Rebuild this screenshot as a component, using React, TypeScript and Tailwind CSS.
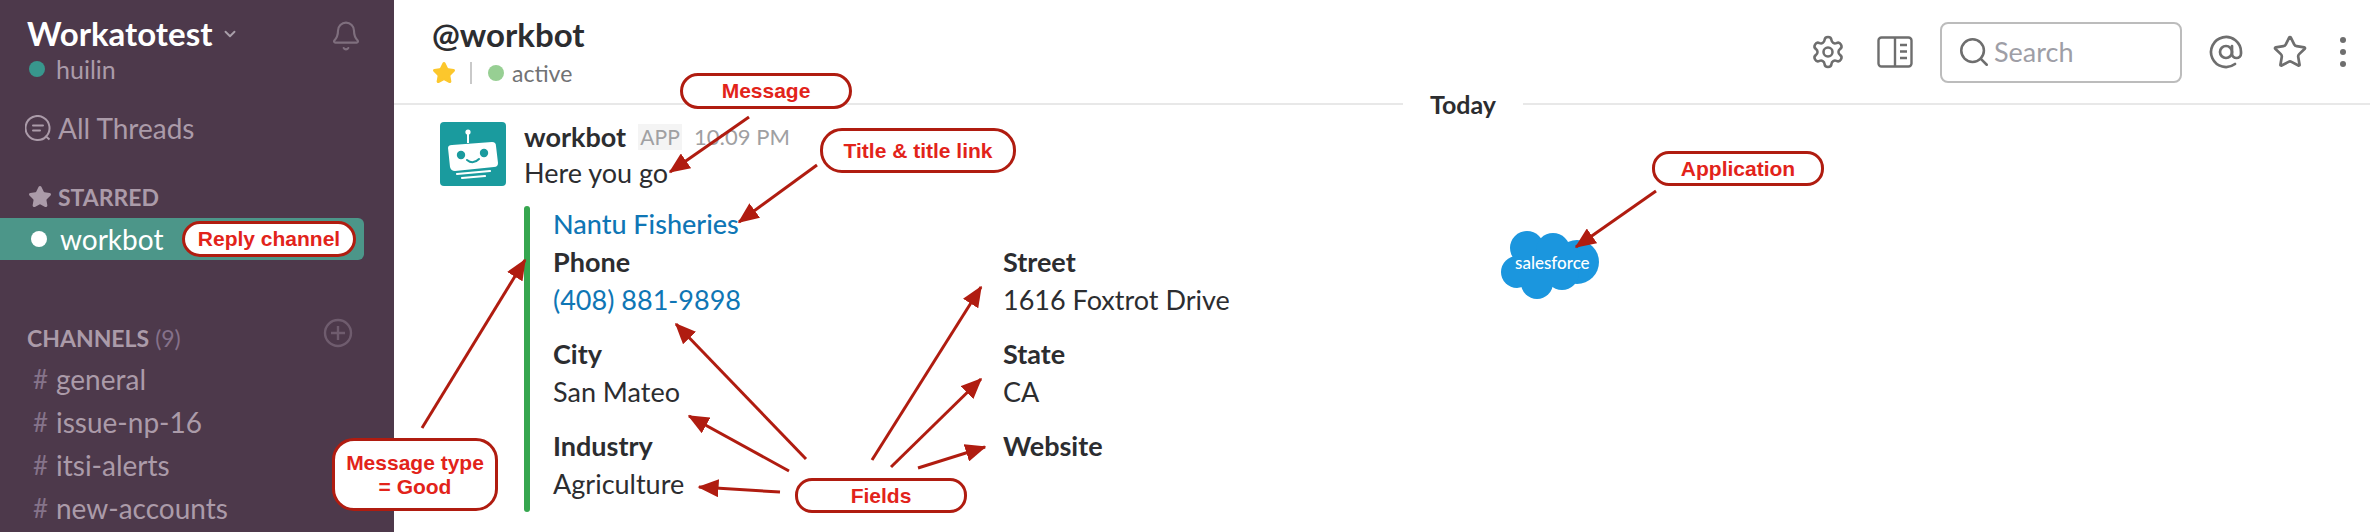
import { AtSign, Bell, ChevronDown, Search, Settings, Star } from "lucide-react";

const channels = ["general", "issue-np-16", "itsi-alerts", "new-accounts"];

const leftFields = [
  { label: "Phone", value: "(408) 881-9898", link: true },
  { label: "City", value: "San Mateo" },
  { label: "Industry", value: "Agriculture" },
];

const rightFields = [
  { label: "Street", value: "1616 Foxtrot Drive" },
  { label: "State", value: "CA" },
  { label: "Website", value: "" },
];

// callout arrows, [x1, y1, x2, y2] in page pixels
const arrows = [
  [749, 117, 670, 172],
  [817, 165, 739, 222],
  [1656, 191, 1576, 247],
  [422, 428, 525, 260],
  [806, 459, 676, 324],
  [789, 471, 689, 416],
  [780, 492, 699, 487],
  [872, 460, 981, 287],
  [891, 467, 981, 379],
  [918, 468, 985, 447],
];

function FieldColumn({ fields }: { fields: { label: string; value: string; link?: boolean }[] }) {
  return (
    <div className="flex flex-col gap-[16px]">
      {fields.map((f) => (
        <div key={f.label} className="h-[76px]">
          <div className="font-bold text-[27px] leading-[38px] text-[#2c2d30]">{f.label}</div>
          <div className={`text-[27px] leading-[38px] ${f.link ? "text-[#0f76b5]" : "text-[#2c2d30]"}`}>{f.value}</div>
        </div>
      ))}
    </div>
  );
}

function Callout({ className, children }: { className: string; children: React.ReactNode }) {
  return (
    <div
      className={`absolute flex items-center justify-center bg-white border-[3px] border-[#b01c10] text-center font-bold text-[#e2231a] text-[21px] leading-[24px] font-['Liberation_Sans',sans-serif] ${className}`}
    >
      {children}
    </div>
  );
}

function Robot() {
  return (
    <svg viewBox="0 0 66 64" className="w-[66px] h-[64px] rounded-[4px]">
      <rect width="66" height="64" fill="#1a9b9e" />
      <circle cx="28" cy="10" r="2.6" fill="#fff" />
      <rect x="27" y="11" width="2" height="10" fill="#fff" />
      <path d="M8 26 Q8 23 12 23 L52 20 Q56 20 56 24 L58 41 Q58 45 54 45 L15 49 Q11 49 10 45 Z" fill="#fff" />
      <circle cx="21" cy="33" r="4.2" fill="#1a9b9e" />
      <circle cx="44" cy="31" r="4.2" fill="#1a9b9e" />
      <path d="M27 38 Q33 43 39 37" stroke="#1a9b9e" strokeWidth="2" fill="none" strokeLinecap="round" />
      <path d="M17 52 L50 49 M22 56 L45 54" stroke="#fff" strokeWidth="2.2" strokeLinecap="round" />
    </svg>
  );
}

function SalesforceLogo() {
  return (
    <div className="absolute left-[1501px] top-[231px] w-[98px] h-[68px]">
      <svg viewBox="0 0 98 68" className="absolute inset-0 w-full h-full">
        <g fill="#1b96de">
          <circle cx="26" cy="17" r="17" />
          <circle cx="52" cy="19" r="17" />
          <circle cx="76" cy="31" r="22" />
          <circle cx="16" cy="41" r="16" />
          <circle cx="36" cy="52" r="16" />
          <circle cx="61" cy="42" r="17" />
          <rect x="18" y="20" width="50" height="30" />
        </g>
      </svg>
      <span className="absolute left-[14px] top-[21px] text-[17px] leading-[22px] font-medium text-white">salesforce</span>
    </div>
  );
}

export default function App() {
  return (
    <div className="relative flex w-[2370px] h-[532px] overflow-hidden bg-white font-['Lato',sans-serif] text-[#2c2d30]">
      {/* Sidebar */}
      <aside className="w-[394px] h-full shrink-0 bg-[#4d394b] pt-[13px]">
        <div className="relative pl-[27px] h-[40px] flex items-center">
          <span className="text-[33px] leading-[40px] font-bold text-white">Workatotest</span>
          <ChevronDown className="ml-[9px] mt-[2px] w-[18px] h-[18px] text-[#a99fa9]" strokeWidth={2.5} />
          <Bell className="absolute left-[330px] top-[7px] w-[32px] h-[32px] text-[#7f6f7e]" strokeWidth={1.6} />
        </div>
        <div className="flex items-center pl-[29px] mt-[1px] h-[30px]">
          <span className="w-[16px] h-[16px] rounded-full bg-[#38978d]" />
          <span className="ml-[11px] text-[25px] leading-[30px] text-[#ab9ba9]">huilin</span>
        </div>
        <div className="flex items-center pl-[25px] mt-[26px] h-[36px]">
          <svg viewBox="0 0 26 26" className="w-[26px] h-[26px] text-[#ab9ba9]" fill="none" stroke="currentColor" strokeWidth="2">
            <path d="M24.5 24.5 L21 21.5 A12 12 0 1 0 13 25 Q18 25 21 21.5" />
            <path d="M8 10.5 H18 M8 15.5 H15" strokeLinecap="round" />
          </svg>
          <span className="ml-[7px] text-[28px] leading-[36px] text-[#ab9ba9]">All Threads</span>
        </div>
        <div className="flex items-center pl-[28px] mt-[37px] h-[28px]">
          <Star className="w-[24px] h-[24px] text-[#ab9ba9]" fill="currentColor" />
          <span className="ml-[6px] text-[23px] leading-[28px] font-bold text-[#ab9ba9]">STARRED</span>
        </div>
        <div className="flex items-center pl-[31px] mt-[7px] w-[364px] h-[42px] bg-[#4c9689] rounded-r-[6px]">
          <span className="w-[16px] h-[16px] rounded-full bg-white" />
          <span className="ml-[13px] text-[28px] leading-[36px] text-white">workbot</span>
        </div>
        <div className="relative flex items-center pl-[27px] mt-[64px] h-[28px]">
          <span className="text-[23px] leading-[28px] font-bold text-[#ab9ba9]">CHANNELS</span>
          <span className="ml-[6px] text-[23px] leading-[28px] text-[#85718a]">(9)</span>
          <svg viewBox="0 0 30 30" className="absolute left-[323px] top-[-6px] w-[30px] h-[30px]" fill="none" stroke="#6f5c6e" strokeWidth="2.4">
            <circle cx="15" cy="15" r="13" />
            <path d="M15 8 V22 M8 15 H22" />
          </svg>
        </div>
        <ul className="mt-[5px]">
          {channels.map((c) => (
            <li key={c} className="flex items-center pl-[33px] h-[43px]">
              <span className="w-[23px] text-[26px] leading-[36px] text-[#85738a]">#</span>
              <span className="text-[28px] leading-[36px] text-[#ab9ba9]">{c}</span>
            </li>
          ))}
        </ul>
      </aside>

      {/* Main */}
      <main className="flex-1 h-full min-w-0">
        <header className="relative flex justify-between h-[105px] border-b-2 border-[#e8e8e8]">
          <div className="pl-[38px] pt-[14px]">
            <div className="text-[33px] leading-[40px] font-bold text-[#2c2d30]">@workbot</div>
            <div className="flex items-center h-[30px] mt-[4px]">
              <Star className="w-[24px] h-[24px] text-[#fcc72c]" fill="currentColor" />
              <span className="ml-[14px] w-[2px] h-[22px] bg-[#c9c9c9]" />
              <span className="ml-[16px] w-[16px] h-[16px] rounded-full bg-[#97cf93]" />
              <span className="ml-[8px] text-[23px] leading-[30px] text-[#717274]">active</span>
            </div>
          </div>
          <div className="flex items-center pr-[24px] h-[104px] text-[#6e6e6e]">
            <Settings className="w-[36px] h-[36px]" strokeWidth={1.7} />
            <svg viewBox="0 0 36 32" className="ml-[31px] w-[36px] h-[32px]" fill="none" stroke="currentColor" strokeWidth="2.4">
              <rect x="1.5" y="1.5" width="33" height="29" rx="3" />
              <path d="M18 1.5 V30.5 M23 9 H30 M23 15.5 H30 M23 22 H30" />
            </svg>
            <div className="ml-[27px] flex items-center w-[242px] h-[61px] border-2 border-[#bcbcbc] rounded-[8px] pl-[15px]">
              <Search className="w-[34px] h-[34px]" strokeWidth={1.8} />
              <span className="ml-[3px] text-[27px] leading-[34px] text-[#9e9ea6]">Search</span>
            </div>
            <AtSign className="ml-[26px] w-[36px] h-[36px]" strokeWidth={1.8} />
            <Star className="ml-[28px] w-[36px] h-[36px]" strokeWidth={1.8} />
            <div className="ml-[32px] flex flex-col gap-[6px]">
              <span className="w-[6px] h-[6px] rounded-full bg-[#6e6e6e]" />
              <span className="w-[6px] h-[6px] rounded-full bg-[#6e6e6e]" />
              <span className="w-[6px] h-[6px] rounded-full bg-[#6e6e6e]" />
            </div>
          </div>
          <div className="absolute left-[1009px] top-[88px] w-[120px] text-center bg-white text-[25px] leading-[32px] font-bold text-[#2c2d30]">
            Today
          </div>
        </header>

        <div className="flex pl-[46px] pt-[17px]">
          <Robot />
          <div className="ml-[18px]">
            <div className="flex items-center h-[30px]">
              <span className="font-bold text-[27px] leading-[36px] text-[#2c2d30]">workbot</span>
              <span className="ml-[12px] w-[44px] h-[26px] flex items-center justify-center bg-[#f4f4f4] text-[21px] text-[#a0a0a2]">APP</span>
              <span className="ml-[12px] text-[22px] leading-[30px] text-[#a0a0a2]">10:09 PM</span>
            </div>
            <div className="text-[27px] leading-[38px] mt-[2px]">Here you go</div>
            <div className="mt-[14px] flex">
              <div className="w-[6px] h-[306px] bg-[#36a64f] rounded-[3px]" />
              <div className="ml-[23px] -mt-[1px]">
                <div className="text-[27px] leading-[38px] font-medium text-[#0f76b5]">Nantu Fisheries</div>
                <div className="flex">
                  <div className="w-[450px]">
                    <FieldColumn fields={leftFields} />
                  </div>
                  <FieldColumn fields={rightFields} />
                </div>
              </div>
            </div>
          </div>
        </div>
      </main>

      <SalesforceLogo />

      {/* Annotation layer */}
      <svg className="absolute left-0 top-0 w-[2370px] h-[532px] pointer-events-none" viewBox="0 0 2370 532">
        <defs>
          <marker id="head" markerWidth="7" markerHeight="6" refX="6.5" refY="3" orient="auto" markerUnits="strokeWidth">
            <path d="M0 0 L7 3 L0 6 Z" fill="#b01c10" />
          </marker>
        </defs>
        {arrows.map(([x1, y1, x2, y2]) => (
          <line key={`${x1}-${y1}`} x1={x1} y1={y1} x2={x2} y2={y2} stroke="#b01c10" strokeWidth="3" markerEnd="url(#head)" />
        ))}
      </svg>
      <Callout className="left-[182px] top-[221px] w-[174px] h-[36px] rounded-[18px]">Reply channel</Callout>
      <Callout className="left-[680px] top-[73px] w-[172px] h-[36px] rounded-[18px]">Message</Callout>
      <Callout className="left-[820px] top-[128px] w-[196px] h-[45px] rounded-[22px]">Title &amp; title link</Callout>
      <Callout className="left-[1652px] top-[151px] w-[172px] h-[35px] rounded-[17px]">Application</Callout>
      <Callout className="left-[332px] top-[438px] w-[166px] h-[73px] rounded-[22px]">
        Message type
        <br />= Good
      </Callout>
      <Callout className="left-[795px] top-[478px] w-[172px] h-[35px] rounded-[17px]">Fields</Callout>
    </div>
  );
}
